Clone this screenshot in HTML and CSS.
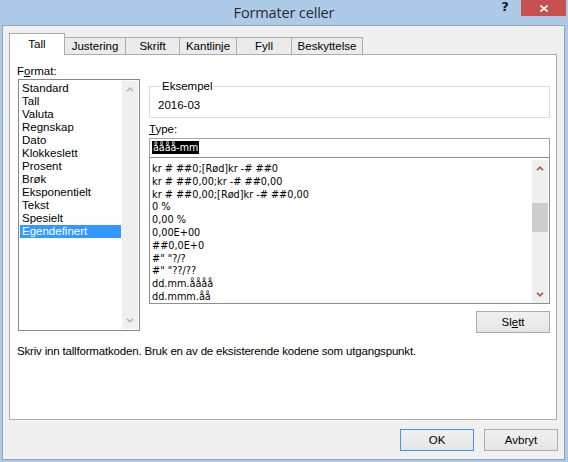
FILE: index.html
```html
<!DOCTYPE html>
<html lang="no">
<head>
<meta charset="utf-8">
<title>Formater celler</title>
<link rel="stylesheet" href="styles.css">
</head>
<body>
<div class="window">
  <div class="titlebar">
    <div class="tb-side"></div>
    <div class="title">Formater celler</div>
    <div class="tb-side tb-buttons">
      <span class="help">?</span>
      <span class="close">
        <svg width="8" height="7" viewBox="0 0 8 7"><path d="M0.5 0.5 L7.5 6.5 M7.5 0.5 L0.5 6.5" stroke="#fff" stroke-width="1.6" fill="none"/></svg>
      </span>
    </div>
  </div>
  <div class="client">
    <div class="tabs">
      <div class="tab active t1">Tall</div>
      <div class="tab t2">Justering</div>
      <div class="tab t3">Skrift</div>
      <div class="tab t4">Kantlinje</div>
      <div class="tab t5">Fyll</div>
      <div class="tab t6">Beskyttelse</div>
    </div>
    <div class="panel">
      <div class="col-left">
        <div class="label">F<u>o</u>rmat:</div>
        <div class="listbox">
          <ul class="items">
            <li>Standard</li>
            <li>Tall</li>
            <li>Valuta</li>
            <li>Regnskap</li>
            <li>Dato</li>
            <li>Klokkeslett</li>
            <li>Prosent</li>
            <li>Brøk</li>
            <li>Eksponentielt</li>
            <li>Tekst</li>
            <li>Spesielt</li>
            <li class="selected">Egendefinert</li>
          </ul>
          <div class="scrollbar disabled">
            <div class="sb-btn"><svg width="8" height="5" viewBox="0 0 8 5"><path d="M1 4.2 L4 1.2 L7 4.2" /></svg></div>
            <div class="sb-track"></div>
            <div class="sb-btn"><svg width="8" height="5" viewBox="0 0 8 5"><path d="M1 0.8 L4 3.8 L7 0.8" /></svg></div>
          </div>
        </div>
      </div>
      <div class="col-right">
        <fieldset class="group">
          <legend>Eksempel</legend>
          <div class="sample">2016-03</div>
        </fieldset>
        <div class="label type-label"><u>T</u>ype:</div>
        <div class="input"><span class="sel">åååå-mm</span></div>
        <div class="codes">
          <ul class="code-items">
            <li>kr # ##0;[Rød]kr -# ##0</li>
            <li>kr # ##0,00;kr -# ##0,00</li>
            <li>kr # ##0,00;[Rød]kr -# ##0,00</li>
            <li>0 %</li>
            <li>0,00 %</li>
            <li>0,00E+00</li>
            <li>##0,0E+0</li>
            <li>#" "?/?</li>
            <li>#" "??/??</li>
            <li>dd.mm.åååå</li>
            <li>dd.mmm.åå</li>
          </ul>
          <div class="scrollbar active">
            <div class="sb-btn"><svg width="8" height="5" viewBox="0 0 8 5"><path d="M1 4.2 L4 1.2 L7 4.2" /></svg></div>
            <div class="sb-track"><div class="sb-thumb"></div></div>
            <div class="sb-btn"><svg width="8" height="5" viewBox="0 0 8 5"><path d="M1 0.8 L4 3.8 L7 0.8" /></svg></div>
          </div>
        </div>
        <div class="slett-row"><button class="btn slett">Sl<u>e</u>tt</button></div>
      </div>
      <div class="hint">Skriv inn tallformatkoden. Bruk en av de eksisterende kodene som utgangspunkt.</div>
    </div>
    <div class="dialog-buttons">
      <button class="btn default">OK</button>
      <button class="btn">Avbryt</button>
    </div>
  </div>
</div>
</body>
</html>
```

FILE: styles.css
```css
* { box-sizing: border-box; }

html, body {
  margin: 0;
  padding: 0;
}

body {
  width: 568px;
  height: 462px;
  overflow: hidden;
  background: #adcae8;
  font-family: "Liberation Sans", Arial, sans-serif;
  font-size: 11.5px;
  color: #000;
}

.window {
  display: flex;
  flex-direction: column;
  width: 568px;
  height: 462px;
}

/* Title bar */
.titlebar {
  height: 25px;
  display: grid;
  grid-template-columns: 1fr auto 1fr;
  align-items: start;
}

.title {
  font-family: "Open Sans", "Noto Sans", sans-serif;
  font-size: 14.6px;
  line-height: 24px;
  color: #2b2b2b;
  letter-spacing: -0.2px;
}

.tb-buttons {
  display: flex;
  justify-content: flex-end;
  align-items: flex-start;
  padding-right: 2px;
}

.help {
  width: 24px;
  text-align: center;
  font-family: "DejaVu Sans", sans-serif;
  font-weight: bold;
  font-size: 13px;
  line-height: 14px;
  color: #1b1b1b;
  margin-right: 4px;
}

.close {
  width: 45px;
  height: 16px;
  background: #c75050;
  display: flex;
  align-items: center;
  justify-content: center;
}

/* Client */
.client {
  margin-left: 2px;
  width: 563px;
  height: 435px;
  border: 1px solid #95a6b8;
  background: #f0f0f0;
  display: flex;
  flex-direction: column;
}

.tabs {
  display: flex;
  align-items: flex-end;
  height: 28px;
  padding-left: 6px;
}

.tab {
  height: 17px;
  border: 1px solid #acacac;
  border-bottom: none;
  background: #ebebeb;
  text-align: center;
  line-height: 16px;
  margin-left: -1px;
}

.tab:first-child { margin-left: 0; }

.tab.active {
  height: 22px;
  background: #fff;
  line-height: 21px;
  margin-bottom: -1px;
  position: relative;
  z-index: 1;
}

.t1 { width: 56px; }
.t2 { width: 62px; }
.t3 { width: 55px; }
.t4 { width: 58px; }
.t5 { width: 56px; }
.t6 { width: 72px; }

.panel {
  margin: 0 7px 0 6px;
  height: 366px;
  background: #fff;
  border: 1px solid #acacac;
  padding: 10px 7px 0 7px;
  display: grid;
  grid-template-columns: 123px 401px;
  column-gap: 9px;
  align-items: start;
  align-content: start;
}

.label {
  height: 13px;
  line-height: 13px;
}

.label u, .btn u { text-decoration-thickness: 1px; text-underline-offset: 1px; }

/* Format list */
.listbox {
  margin: 1px 0 0 1px;
  width: 122px;
  height: 252px;
  border: 1px solid #828790;
  padding: 1px;
  display: flex;
}

.items {
  list-style: none;
  margin: 0 1px 0 0;
  padding: 1px 0 0 0;
  flex: 1;
}

.items li {
  height: 13px;
  line-height: 13px;
  padding-left: 2px;
  white-space: nowrap;
}

.items li.selected {
  background: #3399ff;
  color: #fff;
}

.scrollbar {
  width: 16px;
  background: #efefef;
  display: flex;
  flex-direction: column;
}

.sb-btn {
  height: 17px;
  display: flex;
  align-items: center;
  justify-content: center;
}

.sb-btn svg path {
  fill: none;
  stroke-width: 1.7;
}

.scrollbar.disabled .sb-btn svg path { stroke: #b7bbad; }
.scrollbar.active .sb-btn svg path { stroke: #a85e49; }

.sb-track {
  flex: 1;
  padding-top: 26px;
}

.sb-thumb {
  height: 29px;
  background: #cdcdcd;
}

/* Right column */
.col-right {
  margin-top: 15px;
  display: flex;
  flex-direction: column;
}

.group {
  margin: 0;
  border: 1px solid #dcdcdc;
  padding: 6px 8px 5px 8px;
}

.group legend {
  padding: 0 1px;
  margin-left: 3px;
  line-height: 13px;
}

.sample {
  line-height: 13px;
  height: 13px;
}

.type-label {
  margin-top: 5px;
}

.input {
  margin-top: 2px;
  height: 19px;
  border: 1px solid #a6a6a6;
  border-bottom: none;
  padding: 2px 0 0 2px;
  font-family: "DejaVu Sans Condensed", "DejaVu Sans", sans-serif;
  font-size: 10.6px;
}

.sel {
  background: #000;
  color: #fff;
  line-height: 13px;
  display: inline-block;
  height: 13px;
  padding: 0 1px;
}

.codes {
  height: 147px;
  border: 1px solid #8a8d92;
  padding: 2px 1px 0 1px;
  display: flex;
}

.code-items {
  list-style: none;
  margin: 0;
  padding: 3px 0 0 1px;
  flex: 1;
  font-family: "DejaVu Sans Condensed", "DejaVu Sans", sans-serif;
  font-size: 10.8px;
}

.code-items li {
  height: 12.8px;
  line-height: 12.8px;
  white-space: nowrap;
}

.slett-row {
  display: flex;
  justify-content: flex-end;
  margin-top: 7px;
}

.btn {
  width: 74px;
  height: 22px;
  border: 1px solid #acacac;
  background: linear-gradient(#f0f0f0, #e5e5e5);
  font-family: "Liberation Sans", Arial, sans-serif;
  font-size: 11.5px;
  color: #000;
  padding: 0;
  margin: 0;
}

.btn.default {
  border-color: #3399ff;
}

.hint {
  grid-column: 1 / 3;
  margin-top: 12px;
  line-height: 13px;
  letter-spacing: -0.18px;
}

.dialog-buttons {
  display: flex;
  justify-content: flex-end;
  gap: 10px;
  margin: 9px 6px 0 0;
}
```
